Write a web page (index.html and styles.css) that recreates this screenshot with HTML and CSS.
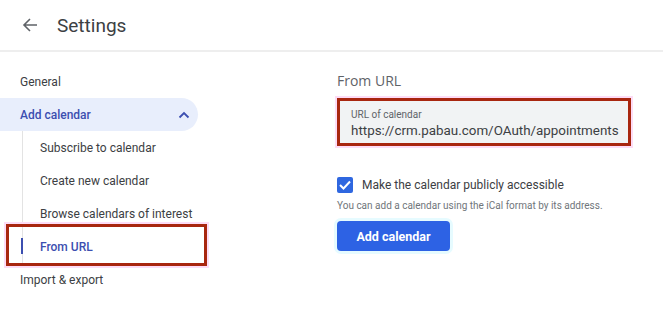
FILE: index.html
```html
<!DOCTYPE html>
<html>
<head>
<meta charset="utf-8">
<link rel="stylesheet" href="styles.css">
</head>
<body>
<header class="topbar">
  <svg class="back" width="16" height="16" viewBox="0 0 16 16"><path d="M15 8H2.5M8 2L2 8l6 6" fill="none" stroke="#5f6368" stroke-width="1.6"/></svg>
  <h1 class="title">Settings</h1>
</header>
<div class="main">
  <nav class="sidebar">
    <div class="nav-item">General</div>
    <div class="nav-item nav-open">Add calendar
      <svg class="chev" width="12" height="8" viewBox="0 0 12 8"><path d="M1.5 6.5L6 2l4.5 4.5" fill="none" stroke="#3c4fb0" stroke-width="1.8"/></svg>
    </div>
    <div class="sublist">
      <div class="sub-item">Subscribe to calendar</div>
      <div class="sub-item">Create new calendar</div>
      <div class="sub-item">Browse calendars of interest</div>
      <div class="sub-item sub-active">From URL<span class="annot-nav"></span></div>
    </div>
    <div class="nav-item">Import &amp; export</div>
  </nav>
  <section class="content">
    <h2 class="heading">From URL</h2>
    <div class="field">
      <div class="field-label">URL of calendar</div>
      <div class="field-value">https://crm.pabau.com/OAuth/appointments</div>
    </div>
    <label class="check-row">
      <span class="checkbox"><svg width="12" height="10" viewBox="0 0 12 10"><path d="M1 5l3.5 3.5L11 1.5" fill="none" stroke="#fff" stroke-width="2"/></svg></span>
      <span class="check-label">Make the calendar publicly accessible</span>
    </label>
    <p class="helper">You can add a calendar using the iCal format by its address.</p>
    <button class="btn">Add calendar</button>
  </section>
</div>
</body>
</html>
```

FILE: styles.css
```css
* { box-sizing: border-box; }
body {
  margin: 0;
  background: #fff;
  font-family: Roboto, "Liberation Sans", sans-serif;
  color: #3c4043;
  width: 663px;
  height: 314px;
  overflow: hidden;
}
.topbar {
  height: 52px;
  display: flex;
  align-items: center;
  padding-left: 22px;
  border-bottom: 2px solid #eeeeee;
}
.back { margin-right: 19px; }
.title {
  margin: 0;
  font-family: Roboto, "Open Sans", sans-serif;
  font-weight: 400;
  font-size: 19px;
  color: #3c4043;
}
.main {
  display: flex;
}
.sidebar {
  width: 337px;
  padding-top: 13px;
}
.nav-item {
  height: 33px;
  display: flex;
  align-items: center;
  padding-left: 20px;
  font-size: 12px;
  width: 198px;
}
.nav-open {
  background: #e8eefc;
  border-radius: 0 17px 17px 0;
  color: #3c4fb0;
  font-weight: 500;
  justify-content: space-between;
  padding-right: 8px;
}
.sublist {
  margin-left: 22px;
  border-left: 1px solid #e3e3e3;
}
.sub-item {
  position: relative;
  height: 33px;
  display: flex;
  align-items: center;
  padding-left: 17px;
  font-size: 12px;
}
.sub-active {
  color: #3c4fb0;
  font-weight: 500;
}
.sub-active::before {
  content: "";
  position: absolute;
  left: -2px;
  top: 8px;
  width: 2px;
  height: 16px;
  background: #3c4fb0;
}
.annot-nav {
  position: absolute;
  left: -17px;
  top: -6px;
  width: 201px;
  height: 42px;
  border: 3px solid #a8260f;
  box-shadow: 0 0 0 2px #fddcf6;
}
.content {
  padding-top: 15px;
}
.heading {
  margin: 0 0 3px 0;
  font-family: "Open Sans", Roboto, sans-serif;
  font-weight: 400;
  font-size: 14px;
  color: #5f6368;
  height: 28px;
  line-height: 28px;
}
.field {
  width: 294px;
  height: 48px;
  background: #f1f3f4;
  border: 3px solid #a8260f;
  box-shadow: 0 0 0 2px #fddcf6;
  padding: 8px 0 0 11px;
  overflow: hidden;
  white-space: nowrap;
}
.field-label {
  font-size: 10px;
  color: #5f6368;
  line-height: 12px;
}
.field-value {
  font-size: 13.4px;
  color: #3c4043;
  line-height: 19px;
  width: 268px;
  overflow: hidden;
}
.check-row {
  display: flex;
  align-items: center;
  margin-top: 31px;
}
.checkbox {
  width: 16px;
  height: 16px;
  background: #2f67e0;
  border-radius: 2px;
  display: flex;
  align-items: center;
  justify-content: center;
  margin-right: 9px;
}
.check-label {
  font-size: 12px;
  color: #3c4043;
}
.helper {
  margin: 5px 0 0 0;
  font-size: 10px;
  color: #70757a;
  line-height: 15px;
}
.btn {
  margin-top: 8px;
  width: 113px;
  height: 30px;
  border: none;
  border-radius: 4px;
  background: #2d62e4;
  color: #fff;
  font-family: Roboto, sans-serif;
  font-weight: 700;
  font-size: 12.5px;
  box-shadow: 0 0 0 3px #e6fbff;
}
```
